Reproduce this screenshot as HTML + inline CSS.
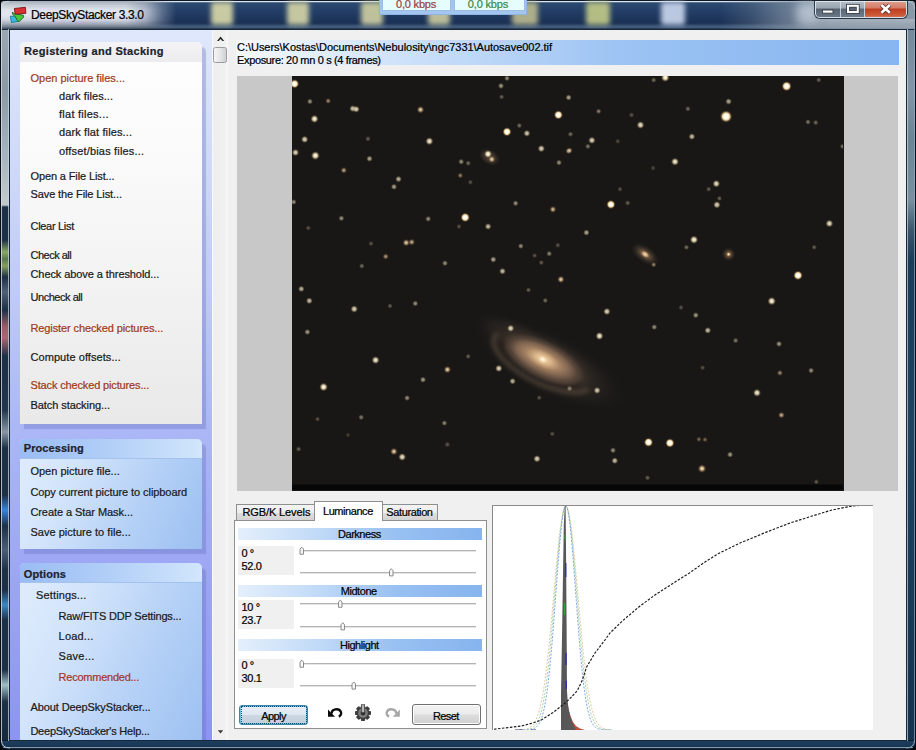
<!DOCTYPE html>
<html><head><meta charset="utf-8"><title>DeepSkyStacker 3.3.0</title>
<style>
*{box-sizing:border-box;margin:0;padding:0}
html,body{width:916px;height:750px;overflow:hidden}
body{position:relative;background:#16324a;font-family:"Liberation Sans",sans-serif;font-size:11px;color:#1a1a1a}
.abs{position:absolute}
.t{position:absolute;white-space:nowrap;line-height:14px;height:14px;-webkit-text-stroke:.22px currentColor}
/* frame */
#titlebar{left:0;top:0;width:916px;height:30px;background:linear-gradient(180deg,#0c1626 0,#0c1626 1px,#dde5ee 1px,#dde5ee 2px,#6f86a2 2px,#2b486e 3.500px,#26426a 8px,#1f3860 16px,#1b3154 23px,#304a6c 25px,#48607f 27px,#3c5270 28px,#16263c 29px,#16263c 30px);overflow:hidden}
#titleglow{left:0;top:1px;width:180px;height:28px;background:linear-gradient(180deg,#a4acb6 0,#c4cad4 4px,#dfe3eb 9px,#e2e5ee 14px,#d0d4e0 19px,#a0a8b6 23px,#6e7a88 26px,#3a4656 28px);-webkit-mask-image:linear-gradient(90deg,#000 0,#000 126px,rgba(0,0,0,.75) 146px,rgba(0,0,0,.3) 162px,transparent 176px);mask-image:linear-gradient(90deg,#000 0,#000 126px,rgba(0,0,0,.75) 146px,rgba(0,0,0,.3) 162px,transparent 176px)}
.blob{position:absolute;top:2px;height:23px;border-radius:3px;filter:blur(2.500px);opacity:.95}
#lframe{left:0;top:30px;width:10px;height:720px;background:linear-gradient(180deg,#9aa8b4 0,#8c9aa6 60px,#a4b2be 120px,#c0c8cc 170px,#c0c8cc 175px,#1c3048 177px,#1c3048 210px,#8aa860 222px,#5a7a50 229px,#86a05c 236px,#1c3048 247px,#506078 262px,#1c3048 280px,#9c5a68 296px,#b06474 308px,#1c3048 326px,#20364e 380px,#8896a6 402px,#1c3048 418px,#1c3048 465px,#3484e0 480px,#1c3048 496px,#4a5e78 520px,#1c3048 540px,#1c3048 560px,#3a88c4 575px,#1c3048 590px,#1c3048 640px,#a0c0c4 655px,#1c3048 672px,#14283c 720px)}
#rframe{left:906px;top:30px;width:10px;height:720px;background:linear-gradient(180deg,#74899a 0,#8296a6 60px,#6c8494 110px,#7a90a0 170px,#3c566c 200px,#1c3c58 230px,#1e4260 400px,#1a3a56 560px,#16324c 720px)}
#bframe{left:0;top:740px;width:916px;height:10px;background:linear-gradient(180deg,#0c1826 0,#0c1826 1px,#1d3d5d 1px,#1b3a59 4px,#18344f 7px,#7f97af 7px,#7f97af 8px,#1a2c40 8px,#0a121c 10px)}
/* content */
#content{left:10px;top:30px;width:896px;height:710px;background:#f0f0f0;overflow:hidden}
#lpanel{left:0;top:0;width:202px;height:710px;background:linear-gradient(180deg,#dfe7fb 0,#d5dffa 80px,#c1ccf7 250px,#aebbf6 370px,#a8b3f5 430px,#99a2f4 580px,#8c94f4 710px)}
#strack{left:202px;top:0;width:17px;height:710px;background:linear-gradient(90deg,#fafafa 0,#fafafa 1px,#eeeeee 1px,#f1f1f1 14px,#fbfbfb 15px,#f2f2f2 16px)}
.sec{position:absolute;border-radius:5px 5px 0 0;box-shadow:4px 5px 1px rgba(100,110,190,.36)}
.hd{position:absolute;left:0;top:0;right:0;height:20px;border-radius:5px 5px 0 0}
.b{font-weight:bold;color:#1e2430}
.r{color:#a03a18}
/* main */
#info{left:226px;top:10px;width:663px;height:25px;background:linear-gradient(90deg,#f5f9fe 0,#e3eefc 12%,#c6ddf9 30%,#9cc3f3 58%,#86b5f0 100%)}
#imgbg{left:227px;top:46px;width:661px;height:415px;background:#c8c8c8}
#sky{left:282px;top:46px;width:552px;height:415px;background:#181716;overflow:hidden}
.tab{position:absolute;border:1px solid #8e8f8f;border-bottom:none;background:linear-gradient(180deg,#f4f4f4 0,#ececec 50%,#dddddd 51%,#d2d2d2 100%)}
#tabpage{left:224px;top:490px;width:253px;height:209px;background:#fff;border:1px solid #8e8f8f}
.bar{position:absolute;left:228px;width:244px;height:12px;background:linear-gradient(90deg,#e4effc 0,#c4dcf8 30%,#98c0f2 65%,#86b4ee 100%)}
.lbl{position:absolute;left:228px;width:56px;height:29px;background:#f0f0f0}
.trk{position:absolute;left:290px;width:176px;height:2px;border-top:1px solid #b4b4b4;background:#e4e4e4}
.thumb{position:absolute;width:5px;height:9px}
.btn{position:absolute;height:20px;border:1px solid #707070;border-radius:3px;background:linear-gradient(180deg,#f2f2f2 0,#ebebeb 48%,#dddddd 52%,#cfcfcf 100%);box-shadow:inset 0 0 0 1px #fcfcfc}
#hist{left:482px;top:475px;width:381px;height:225px;overflow:hidden;background:#fff;border-left:1px solid #8a8a8a;border-top:1px solid #8a8a8a}
</style></head><body>

<!-- window frame -->
<div id="titlebar" class="abs">
  <div id="titleglow" class="abs"></div>
  <div class="blob" style="left:211px;width:22px;background:#d2d3a6"></div>
  <div class="blob" style="left:287px;width:22px;background:#cecfa4"></div>
  <div class="blob" style="left:361px;width:22px;background:#c8c9a0"></div>
  <div class="blob" style="left:428px;width:22px;background:#c4c59e"></div>
  <div class="blob" style="left:512px;width:26px;background:#b4b48c"></div>
  <div class="blob" style="left:586px;width:24px;background:#bcc486"></div>
  <div class="blob" style="left:661px;width:24px;background:#c4d0e8"></div>
  <div class="abs" style="left:720px;top:1px;width:196px;height:28px;background:linear-gradient(90deg,rgba(130,146,162,0) 0,rgba(130,146,162,.25) 30px,rgba(134,150,166,.6) 60px,rgba(140,154,168,.85) 90px,rgba(150,162,176,.9) 196px)"></div>
  <div class="abs" style="left:796px;top:2px;width:24px;height:22px;border-radius:8px;background:rgba(220,230,240,.55);filter:blur(4px)"></div>
  <div class="abs" style="left:790px;top:19px;width:126px;height:9px;background:linear-gradient(180deg,rgba(180,190,200,.7),rgba(150,162,174,.5));-webkit-mask-image:linear-gradient(90deg,transparent 0,#000 40px);mask-image:linear-gradient(90deg,transparent 0,#000 40px)"></div>
</div>
<div id="lframe" class="abs"></div>
<div id="rframe" class="abs"></div>
<div id="bframe" class="abs"></div>
<div class="abs" style="left:0;top:0;width:1px;height:750px;background:#0a0e14"></div>
<div class="abs" style="left:1px;top:8px;width:1px;height:734px;background:rgba(210,222,232,.8)"></div>
<div class="abs" style="left:8px;top:29px;width:1px;height:712px;background:rgba(200,212,222,.75)"></div>
<div class="abs" style="left:9px;top:29px;width:1px;height:712px;background:#18283c"></div>
<div class="abs" style="left:906px;top:29px;width:1px;height:712px;background:#18283c"></div>
<div class="abs" style="left:907px;top:29px;width:1px;height:712px;background:rgba(200,214,226,.7)"></div>
<div class="abs" style="left:915px;top:0;width:1px;height:750px;background:#0a0e14"></div>
<div class="abs" style="left:9px;top:29px;width:898px;height:1px;background:#18283c"></div>
<div class="abs" style="left:9px;top:740px;width:898px;height:1px;background:#18283c"></div>

<div class="abs" style="left:914px;top:8px;width:1px;height:734px;background:rgba(150,178,204,.65)"></div>
<svg class="abs" style="left:0;top:0" width="916" height="750" viewBox="0 0 916 750">
  <!-- rounded outer corners -->
  <path d="M916 740 V750 H904 Q916 750 916 740 Z M0 740 V750 H12 Q0 750 0 740 Z" fill="#05080c"/>
  <path d="M914.500 740 Q914.500 748 906 748" fill="none" stroke="#86a0ba" stroke-width="1"/>
  <path d="M1.500 740 Q1.500 748 10 748" fill="none" stroke="#b4c4d2" stroke-width="1"/>
  <rect x="906" y="747" width="10" height="3" fill="#05080c" opacity="0"/>
  <path d="M0 0 H7 Q0 0 0 7 Z M916 0 H909 Q916 0 916 7 Z" fill="#05080c"/>
  <path d="M1.500 9 Q1.500 1.500 9 1.500" fill="none" stroke="#d4dce6" stroke-width="1"/>
  <path d="M914.500 9 Q914.500 1.500 907 1.500" fill="none" stroke="#b4c4d2" stroke-width="1"/>
</svg>
<!-- app icon -->
<svg class="abs" style="left:0;top:0" width="34" height="30" viewBox="0 0 34 30">
  <path d="M10.300 16.200 L15.600 16.400 L18 21.300 L11.500 22.600 Z" fill="#3db6e6" stroke="#167f8e" stroke-width=".9" stroke-linejoin="round"/>
  <path d="M12.200 12.400 L14.600 13.600 L23.300 15.200 L23.700 17 L19.500 21.400 L17.700 21.300 L15.300 16.500 L12.900 14.700 Z" fill="#46c63e" stroke="#1d6a26" stroke-width=".9" stroke-linejoin="round"/>
  <path d="M14.300 8.500 L25.400 7.300 L25.900 13.300 L15.200 14.200 Z" fill="#d93030" stroke="#7e1616" stroke-width=".9" stroke-linejoin="round"/>
</svg>
<!--TITLETEXT-->

<!-- kbps widget -->
<div class="abs" style="left:379px;top:-2px;width:148px;height:17px;background:#a3c6f0;border:1px solid #8fb4e2"></div>
<div class="abs" style="left:382px;top:-2px;width:69px;height:13px;background:#e5fdfd;border:1px solid #9cbce0"></div>
<div class="abs" style="left:454px;top:-2px;width:71px;height:13px;background:#e5fdfd;border:1px solid #9cbce0"></div>

<!-- caption buttons -->
<div class="abs" style="left:815px;top:-1px;width:92px;height:19px;border:1px solid rgba(225,235,245,.85);border-radius:0 0 5px 5px;overflow:hidden;box-shadow:0 0 0 1px rgba(20,30,45,.8)">
  <div class="abs" style="left:0;top:0;width:25px;height:18px;background:linear-gradient(180deg,#b4bec8 0,#98a4b0 45%,#56626f 50%,#6c7a8a 100%);border-right:1px solid rgba(220,230,240,.8)"></div>
  <div class="abs" style="left:25px;top:0;width:24px;height:18px;background:linear-gradient(180deg,#b8c2cc 0,#9ca8b4 45%,#5a6673 50%,#70808f 100%);border-right:1px solid rgba(220,230,240,.8)"></div>
  <div class="abs" style="left:49px;top:0;width:42px;height:18px;background:linear-gradient(180deg,#e0a496 0,#d27c68 45%,#c03c20 50%,#cc5a3a 85%,#d88468 100%)"></div>
</div>
<div class="abs" style="left:812px;top:0;width:98px;height:1px;background:#1a2430"></div>
<div class="abs" style="left:816px;top:1px;width:90px;height:1px;background:rgba(240,244,248,.75)"></div>
<svg class="abs" style="left:815px;top:0" width="92" height="19" viewBox="0 0 92 19">
  <rect x="7.500" y="10" width="10.500" height="3.200" fill="#fff" stroke="#3c444e" stroke-width="1"/>
  <rect x="33" y="5.800" width="9.800" height="6.200" fill="#5a6674" stroke="#3c444e" stroke-width="3.800"/>
  <rect x="33" y="5.800" width="9.800" height="6.200" fill="none" stroke="#fff" stroke-width="2"/>
  <path d="M66.400 5 L74.800 12.800 M74.800 5 L66.400 12.800" stroke="#5c2a22" stroke-width="4.400" fill="none"/>
  <path d="M66.400 5 L74.800 12.800 M74.800 5 L66.400 12.800" stroke="#fff" stroke-width="2.700" fill="none"/>
</svg>

<!-- client area -->
<div id="content" class="abs">
  <div id="lpanel" class="abs"></div>
  <div id="strack" class="abs"></div>

  <!-- section 1 -->
  <div class="sec" style="left:10px;top:12px;width:182px;height:381.600px;background:linear-gradient(180deg,#fdfdfd 0,#fbfbfb 100px,#f2f2f2 250px,#e9e9e9 381px)">
    <div class="hd" style="background:linear-gradient(180deg,#f4f4f6 0,#ececee 100%)"></div>
  </div>
  <!-- section 2 -->
  <div class="sec" style="left:10px;top:408.500px;width:182px;height:110.500px;background:linear-gradient(115deg,#e0ecfc 0,#d2e4fb 30%,#b4d0f6 65%,#9cc0f1 100%)">
    <div class="hd" style="background:linear-gradient(90deg,#9abcf4 0,#b2cff7 50%,#d2e6fc 100%);border-bottom:1px solid #a4c2ee"></div>
  </div>
  <!-- section 3 -->
  <div class="sec" style="left:10px;top:532.800px;width:182px;height:190px;background:linear-gradient(115deg,#e0ecfc 0,#d2e4fb 30%,#b4d0f6 65%,#9cc0f1 100%)">
    <div class="hd" style="background:linear-gradient(90deg,#9abcf4 0,#b2cff7 50%,#d2e6fc 100%);border-bottom:1px solid #a4c2ee"></div>
  </div>

  <!-- scrollbar bits -->
  <svg class="abs" style="left:202px;top:0" width="17" height="710" viewBox="0 0 17 710">
    <path d="M5 10.900 L8.600 6.600 L12.200 10.900 L10.300 10.900 L8.600 8.900 L6.900 10.900 Z" fill="#262626"/>
    <path d="M5.800 700.200 L8.500 703.600 L11.200 700.200 Z" fill="#3a3a3a"/>
    <defs><linearGradient id="thg" x1="0" x2="1" y1="0" y2="0"><stop offset="0" stop-color="#f6f6f6"/><stop offset=".5" stop-color="#e6e6e8"/><stop offset="1" stop-color="#cfcfd3"/></linearGradient></defs>
    <rect x="1.500" y="17.500" width="13" height="15" rx="2" fill="url(#thg)" stroke="#9c9c9e"/>
  </svg>

  <!-- info bar -->
  <div id="info" class="abs"></div>
  <div id="imgbg" class="abs"></div>
  <div id="sky" class="abs">
    <svg width="551" height="414" viewBox="0 0 551 414" style="position:absolute;left:0;top:0">
      <defs>
        <radialGradient id="sw"><stop offset="0" stop-color="#fffdf0"/><stop offset=".36" stop-color="#f6ecc8" stop-opacity=".96"/><stop offset=".64" stop-color="#c8b48a" stop-opacity=".58"/><stop offset="1" stop-color="#504030" stop-opacity="0"/></radialGradient>
        <radialGradient id="sb"><stop offset="0" stop-color="#ffffff"/><stop offset=".36" stop-color="#fffbea"/><stop offset=".58" stop-color="#f2d8a4" stop-opacity=".92"/><stop offset=".8" stop-color="#8a6840" stop-opacity=".45"/><stop offset="1" stop-color="#403020" stop-opacity="0"/></radialGradient>
        <radialGradient id="so"><stop offset="0" stop-color="#fff0d4"/><stop offset=".3" stop-color="#f0d0a0" stop-opacity=".95"/><stop offset=".6" stop-color="#b8946a" stop-opacity=".55"/><stop offset="1" stop-color="#503820" stop-opacity="0"/></radialGradient>
        <radialGradient id="gal1"><stop offset="0" stop-color="#d0a880"/><stop offset=".45" stop-color="#b48e6a" stop-opacity=".9"/><stop offset=".75" stop-color="#94745a" stop-opacity=".6"/><stop offset="1" stop-color="#705844" stop-opacity="0"/></radialGradient>
        <radialGradient id="gal2"><stop offset="0" stop-color="#6a5646" stop-opacity=".8"/><stop offset=".6" stop-color="#4c3e34" stop-opacity=".55"/><stop offset="1" stop-color="#2a2420" stop-opacity="0"/></radialGradient>
        <radialGradient id="gal4"><stop offset="0" stop-color="#8a6e58" stop-opacity=".95"/><stop offset=".65" stop-color="#725a4a" stop-opacity=".8"/><stop offset=".85" stop-color="#5a483c" stop-opacity=".45"/><stop offset="1" stop-color="#403228" stop-opacity="0"/></radialGradient>
        <filter id="bl3" x="-20%" y="-80%" width="140%" height="260%"><feGaussianBlur stdDeviation="1.400"/></filter>
        <filter id="bl2" x="-20%" y="-50%" width="140%" height="200%"><feGaussianBlur stdDeviation="2.200"/></filter>
        <radialGradient id="gal6"><stop offset="0" stop-color="#f6dcb4"/><stop offset=".5" stop-color="#e0bc90" stop-opacity=".75"/><stop offset="1" stop-color="#c09c74" stop-opacity="0"/></radialGradient>
        <radialGradient id="gal5"><stop offset="0" stop-color="#fffaf0"/><stop offset=".4" stop-color="#ffe8c0" stop-opacity=".8"/><stop offset="1" stop-color="#e0b888" stop-opacity="0"/></radialGradient>
        <radialGradient id="gal3"><stop offset="0" stop-color="#e0b880" stop-opacity=".9"/><stop offset=".4" stop-color="#9a7450" stop-opacity=".5"/><stop offset="1" stop-color="#403020" stop-opacity="0"/></radialGradient>
      </defs>
      <!-- main galaxy NGC 7331 -->
      <g transform="translate(250.800 283.500) rotate(26.500)">
        <ellipse cx="10" cy="1" rx="84" ry="31" fill="url(#gal2)" opacity=".5"/>
        <ellipse cx="-34" cy="-8" rx="46" ry="17" fill="url(#gal2)" opacity=".35"/>
        <ellipse cx="3" cy="1" rx="60" ry="26" fill="url(#gal2)"/>
        <ellipse cx="1" cy="0" rx="47" ry="20" fill="url(#gal4)"/>
        <path d="M-52 -3 A52 21 0 0 0 54 6" fill="none" stroke="#74604e" stroke-width="4.500" opacity=".42" filter="url(#bl2)"/>
        <path d="M-43 1 A43 16.500 0 0 0 44 5" fill="none" stroke="#141312" stroke-width="2.600" opacity=".4" filter="url(#bl3)"/>
        <ellipse cx="0" cy="-.5" rx="37" ry="14.500" fill="url(#gal1)"/>
        <ellipse cx="0" cy="-.5" rx="18" ry="8.500" fill="url(#gal6)"/>
        <ellipse cx="0" cy="0" rx="6" ry="4.500" fill="url(#gal5)"/>
      </g>
      <!-- small galaxies -->
      <g transform="translate(353.100 178.300) rotate(35)"><ellipse rx="17" ry="9" fill="url(#gal2)" opacity=".8"/><ellipse rx="12" ry="6" fill="url(#gal3)"/><ellipse rx="4.500" ry="3" fill="url(#gal6)"/></g>
      <g transform="translate(197.500 81) rotate(30)"><ellipse rx="12" ry="8" fill="url(#gal2)"/></g>
      <circle cx="196" cy="78" r="4.200" fill="url(#sw)"/>
      <circle cx="199.800" cy="83.300" r="3.800" fill="url(#so)" opacity=".85"/>
      <circle cx="436.600" cy="178.300" r="7" fill="url(#gal3)"/><circle cx="436.600" cy="178.300" r="2.500" fill="url(#so)"/>
<circle cx="2.6" cy="7.8" r="4.8" fill="url(#sb)" opacity="1.00"/>
<circle cx="17.9" cy="25.5" r="3.2" fill="url(#sw)" opacity="0.50"/>
<circle cx="36.2" cy="24.9" r="3.2" fill="url(#so)" opacity="0.55"/>
<circle cx="60.8" cy="32.6" r="3.7" fill="url(#sw)" opacity="0.75"/>
<circle cx="64.2" cy="33.2" r="3.7" fill="url(#sw)" opacity="0.80"/>
<circle cx="22.5" cy="42.9" r="4.3" fill="url(#sw)" opacity="0.95"/>
<circle cx="128.5" cy="33.7" r="4.0" fill="url(#so)" opacity="0.85"/>
<circle cx="12.7" cy="63.4" r="3.9" fill="url(#sw)" opacity="0.80"/>
<circle cx="3.5" cy="76.5" r="3.9" fill="url(#sw)" opacity="0.80"/>
<circle cx="23.4" cy="79.6" r="4.6" fill="url(#sw)" opacity="1.00"/>
<circle cx="76.0" cy="62.8" r="3.0" fill="url(#sw)" opacity="0.30"/>
<circle cx="77.5" cy="82.7" r="3.4" fill="url(#sw)" opacity="0.60"/>
<circle cx="137.4" cy="65.2" r="4.2" fill="url(#sw)" opacity="0.90"/>
<circle cx="51.8" cy="94.3" r="3.5" fill="url(#so)" opacity="0.65"/>
<circle cx="106.5" cy="103.1" r="3.5" fill="url(#sw)" opacity="0.65"/>
<circle cx="102.0" cy="110.8" r="3.3" fill="url(#sw)" opacity="0.60"/>
<circle cx="209.0" cy="9.9" r="3.3" fill="url(#sw)" opacity="0.55"/>
<circle cx="215.0" cy="2.3" r="3.1" fill="url(#sw)" opacity="0.50"/>
<circle cx="209.6" cy="20.9" r="2.9" fill="url(#sw)" opacity="0.30"/>
<circle cx="215.0" cy="55.8" r="4.8" fill="url(#sb)" opacity="1.00"/>
<circle cx="227.3" cy="49.6" r="3.0" fill="url(#sw)" opacity="0.35"/>
<circle cx="234.9" cy="57.3" r="3.7" fill="url(#sw)" opacity="0.75"/>
<circle cx="266.4" cy="38.9" r="4.8" fill="url(#sb)" opacity="1.00"/>
<circle cx="276.6" cy="21.5" r="3.3" fill="url(#sw)" opacity="0.60"/>
<circle cx="249.3" cy="72.6" r="3.9" fill="url(#sw)" opacity="0.80"/>
<circle cx="276.6" cy="75.0" r="3.3" fill="url(#sw)" opacity="0.60"/>
<circle cx="267.0" cy="86.6" r="3.2" fill="url(#sw)" opacity="0.50"/>
<circle cx="169.2" cy="85.7" r="3.2" fill="url(#sw)" opacity="0.50"/>
<circle cx="176.2" cy="87.2" r="3.0" fill="url(#sw)" opacity="0.35"/>
<circle cx="168.3" cy="99.5" r="3.2" fill="url(#so)" opacity="0.50"/>
<circle cx="178.4" cy="106.2" r="2.9" fill="url(#sw)" opacity="0.25"/>
<circle cx="223.6" cy="127.3" r="3.2" fill="url(#sw)" opacity="0.50"/>
<circle cx="260.9" cy="133.4" r="3.7" fill="url(#so)" opacity="0.75"/>
<circle cx="173.2" cy="141.4" r="5.0" fill="url(#sb)" opacity="1.00"/>
<circle cx="136.2" cy="142.9" r="3.2" fill="url(#sw)" opacity="0.50"/>
<circle cx="196.1" cy="150.5" r="3.6" fill="url(#sw)" opacity="0.70"/>
<circle cx="167.0" cy="150.5" r="3.0" fill="url(#so)" opacity="0.30"/>
<circle cx="49.4" cy="142.3" r="3.2" fill="url(#sw)" opacity="0.50"/>
<circle cx="16.3" cy="152.0" r="3.0" fill="url(#so)" opacity="0.30"/>
<circle cx="1.7" cy="126.0" r="3.1" fill="url(#sw)" opacity="0.50"/>
<circle cx="114.2" cy="166.7" r="3.9" fill="url(#so)" opacity="0.85"/>
<circle cx="119.7" cy="166.1" r="3.6" fill="url(#so)" opacity="0.70"/>
<circle cx="79.0" cy="167.6" r="2.9" fill="url(#sw)" opacity="0.25"/>
<circle cx="93.7" cy="180.5" r="3.4" fill="url(#so)" opacity="0.60"/>
<circle cx="69.8" cy="190.0" r="3.0" fill="url(#sw)" opacity="0.35"/>
<circle cx="153.0" cy="187.2" r="3.2" fill="url(#sw)" opacity="0.50"/>
<circle cx="201.3" cy="183.5" r="3.4" fill="url(#sw)" opacity="0.60"/>
<circle cx="210.5" cy="195.2" r="3.6" fill="url(#sw)" opacity="0.70"/>
<circle cx="228.8" cy="170.1" r="3.1" fill="url(#sw)" opacity="0.50"/>
<circle cx="242.6" cy="179.6" r="3.0" fill="url(#so)" opacity="0.30"/>
<circle cx="249.3" cy="186.6" r="3.0" fill="url(#so)" opacity="0.35"/>
<circle cx="257.2" cy="177.7" r="3.1" fill="url(#sw)" opacity="0.45"/>
<circle cx="265.8" cy="169.2" r="3.0" fill="url(#sw)" opacity="0.25"/>
<circle cx="268.9" cy="203.4" r="3.9" fill="url(#so)" opacity="0.85"/>
<circle cx="9.3" cy="212.9" r="3.5" fill="url(#sw)" opacity="0.65"/>
<circle cx="339.5" cy="39.0" r="3.0" fill="url(#sw)" opacity="0.25"/>
<circle cx="325.7" cy="65.3" r="3.0" fill="url(#so)" opacity="0.25"/>
<circle cx="361.0" cy="92.0" r="3.0" fill="url(#sw)" opacity="0.20"/>
<circle cx="373.3" cy="1.6" r="4.5" fill="url(#sw)" opacity="1.00"/>
<circle cx="361.7" cy="4.0" r="3.0" fill="url(#sw)" opacity="0.35"/>
<circle cx="494.6" cy="10.2" r="5.3" fill="url(#sb)" opacity="1.00"/>
<circle cx="526.7" cy="4.0" r="3.0" fill="url(#sw)" opacity="0.30"/>
<circle cx="306.6" cy="35.3" r="3.2" fill="url(#so)" opacity="0.50"/>
<circle cx="436.6" cy="25.5" r="3.5" fill="url(#sw)" opacity="0.60"/>
<circle cx="395.9" cy="32.8" r="3.0" fill="url(#sw)" opacity="0.35"/>
<circle cx="434.1" cy="40.5" r="6.5" fill="url(#sb)" opacity="1.00"/>
<circle cx="348.5" cy="49.0" r="4.1" fill="url(#sw)" opacity="0.85"/>
<circle cx="516.0" cy="46.0" r="3.0" fill="url(#sw)" opacity="0.40"/>
<circle cx="523.7" cy="46.6" r="3.0" fill="url(#sw)" opacity="0.35"/>
<circle cx="278.5" cy="58.2" r="3.0" fill="url(#sw)" opacity="0.35"/>
<circle cx="299.9" cy="64.3" r="3.9" fill="url(#sw)" opacity="0.80"/>
<circle cx="295.9" cy="70.4" r="3.0" fill="url(#sw)" opacity="0.40"/>
<circle cx="277.6" cy="74.4" r="3.3" fill="url(#so)" opacity="0.60"/>
<circle cx="399.9" cy="60.6" r="3.6" fill="url(#sw)" opacity="0.70"/>
<circle cx="383.0" cy="85.7" r="4.2" fill="url(#sw)" opacity="0.90"/>
<circle cx="424.3" cy="107.7" r="4.0" fill="url(#sw)" opacity="0.85"/>
<circle cx="416.7" cy="113.2" r="2.9" fill="url(#sw)" opacity="0.30"/>
<circle cx="424.9" cy="128.8" r="3.9" fill="url(#sw)" opacity="0.80"/>
<circle cx="427.4" cy="122.4" r="2.9" fill="url(#sw)" opacity="0.30"/>
<circle cx="318.9" cy="128.5" r="4.8" fill="url(#sb)" opacity="1.00"/>
<circle cx="335.7" cy="127.0" r="3.0" fill="url(#sw)" opacity="0.30"/>
<circle cx="328.0" cy="113.2" r="2.9" fill="url(#sw)" opacity="0.25"/>
<circle cx="294.4" cy="156.6" r="3.4" fill="url(#sw)" opacity="0.60"/>
<circle cx="402.0" cy="163.7" r="4.4" fill="url(#sw)" opacity="0.95"/>
<circle cx="394.4" cy="171.3" r="3.0" fill="url(#sw)" opacity="0.35"/>
<circle cx="361.7" cy="188.7" r="3.1" fill="url(#so)" opacity="0.50"/>
<circle cx="537.4" cy="147.5" r="4.1" fill="url(#sw)" opacity="0.85"/>
<circle cx="522.2" cy="171.3" r="2.9" fill="url(#sw)" opacity="0.30"/>
<circle cx="506.0" cy="199.4" r="5.0" fill="url(#sb)" opacity="1.00"/>
<circle cx="550.6" cy="70.4" r="3.0" fill="url(#sw)" opacity="0.40"/>
<circle cx="17.3" cy="224.8" r="3.6" fill="url(#sw)" opacity="0.70"/>
<circle cx="62.2" cy="233.0" r="3.9" fill="url(#sw)" opacity="0.80"/>
<circle cx="15.4" cy="256.0" r="3.3" fill="url(#sw)" opacity="0.55"/>
<circle cx="123.3" cy="227.5" r="3.2" fill="url(#sw)" opacity="0.50"/>
<circle cx="98.0" cy="230.0" r="2.9" fill="url(#sw)" opacity="0.30"/>
<circle cx="83.6" cy="284.1" r="4.2" fill="url(#sw)" opacity="0.90"/>
<circle cx="31.6" cy="311.0" r="4.5" fill="url(#sw)" opacity="1.00"/>
<circle cx="155.4" cy="293.6" r="4.0" fill="url(#so)" opacity="0.85"/>
<circle cx="131.0" cy="303.7" r="3.3" fill="url(#sw)" opacity="0.55"/>
<circle cx="115.1" cy="322.0" r="3.2" fill="url(#sw)" opacity="0.50"/>
<circle cx="69.2" cy="341.3" r="3.1" fill="url(#sw)" opacity="0.40"/>
<circle cx="25.5" cy="343.1" r="3.0" fill="url(#so)" opacity="0.30"/>
<circle cx="6.6" cy="373.1" r="3.0" fill="url(#sw)" opacity="0.30"/>
<circle cx="101.9" cy="375.5" r="4.0" fill="url(#so)" opacity="0.85"/>
<circle cx="110.2" cy="381.0" r="4.1" fill="url(#sw)" opacity="0.85"/>
<circle cx="152.4" cy="347.1" r="3.1" fill="url(#sw)" opacity="0.45"/>
<circle cx="155.4" cy="368.5" r="3.2" fill="url(#sw)" opacity="0.25"/>
<circle cx="206.8" cy="292.4" r="3.9" fill="url(#sw)" opacity="0.80"/>
<circle cx="220.6" cy="305.2" r="3.5" fill="url(#sw)" opacity="0.65"/>
<circle cx="218.7" cy="252.3" r="3.9" fill="url(#sw)" opacity="0.80"/>
<circle cx="176.2" cy="280.4" r="2.9" fill="url(#sw)" opacity="0.30"/>
<circle cx="245.0" cy="382.8" r="3.9" fill="url(#sw)" opacity="0.80"/>
<circle cx="236.5" cy="214.0" r="2.9" fill="url(#sw)" opacity="0.30"/>
<circle cx="253.3" cy="224.5" r="3.0" fill="url(#sw)" opacity="0.35"/>
<circle cx="56.0" cy="359.0" r="3.0" fill="url(#so)" opacity="0.20"/>
<circle cx="247.2" cy="321.7" r="2.9" fill="url(#sw)" opacity="0.25"/>
<circle cx="260.3" cy="357.8" r="2.9" fill="url(#sw)" opacity="0.25"/>
<circle cx="314.9" cy="235.5" r="3.9" fill="url(#sw)" opacity="0.80"/>
<circle cx="307.5" cy="260.0" r="4.2" fill="url(#sw)" opacity="0.90"/>
<circle cx="305.1" cy="314.4" r="3.8" fill="url(#sw)" opacity="0.75"/>
<circle cx="277.6" cy="312.5" r="3.2" fill="url(#sw)" opacity="0.40"/>
<circle cx="362.3" cy="251.1" r="3.2" fill="url(#sw)" opacity="0.50"/>
<circle cx="403.8" cy="239.2" r="3.3" fill="url(#sw)" opacity="0.55"/>
<circle cx="415.8" cy="254.4" r="3.6" fill="url(#sw)" opacity="0.70"/>
<circle cx="443.6" cy="264.5" r="3.1" fill="url(#sw)" opacity="0.40"/>
<circle cx="479.7" cy="225.1" r="4.4" fill="url(#sw)" opacity="0.95"/>
<circle cx="487.0" cy="267.9" r="3.3" fill="url(#sw)" opacity="0.55"/>
<circle cx="487.9" cy="296.9" r="3.3" fill="url(#so)" opacity="0.55"/>
<circle cx="519.1" cy="294.5" r="3.2" fill="url(#sw)" opacity="0.50"/>
<circle cx="465.0" cy="316.8" r="4.2" fill="url(#sw)" opacity="0.90"/>
<circle cx="489.4" cy="339.1" r="3.6" fill="url(#so)" opacity="0.70"/>
<circle cx="356.5" cy="366.3" r="4.9" fill="url(#sb)" opacity="1.00"/>
<circle cx="377.9" cy="367.0" r="4.9" fill="url(#sb)" opacity="1.00"/>
<circle cx="406.9" cy="363.3" r="3.0" fill="url(#so)" opacity="0.40"/>
<circle cx="413.0" cy="363.6" r="3.0" fill="url(#so)" opacity="0.40"/>
<circle cx="438.1" cy="378.6" r="3.3" fill="url(#sw)" opacity="0.55"/>
<circle cx="410.0" cy="392.6" r="4.5" fill="url(#so)" opacity="0.95"/>
<circle cx="321.0" cy="374.3" r="3.2" fill="url(#sw)" opacity="0.50"/>
<circle cx="322.8" cy="384.7" r="3.6" fill="url(#sw)" opacity="0.70"/>
<circle cx="355.5" cy="401.8" r="3.0" fill="url(#sw)" opacity="0.30"/>
<circle cx="524.3" cy="405.8" r="3.0" fill="url(#so)" opacity="0.35"/>
<circle cx="410.6" cy="291.7" r="2.9" fill="url(#sw)" opacity="0.25"/>
<circle cx="389.0" cy="231.5" r="2.9" fill="url(#sw)" opacity="0.25"/>
      <rect x="0" y="408.500" width="552" height="7" fill="#070707"/>
    </svg>
  </div>

  <!-- tabs -->
  <div class="tab" style="left:226px;top:474px;width:79px;height:17px"></div>
  <div class="tab" style="left:372px;top:474px;width:56px;height:17px"></div>
  <div id="tabpage" class="abs"></div>
  <div class="tab" style="left:304px;top:471px;width:69px;height:20px;background:#fff"></div>

  <div class="bar" style="top:498px"></div>
  <div class="bar" style="top:554.600px"></div>
  <div class="bar" style="top:609px"></div>
  <div class="lbl" style="top:516px"></div>
  <div class="lbl" style="top:570px"></div>
  <div class="lbl" style="top:629px"></div>

  <div class="trk" style="top:520px"></div>
  <div class="trk" style="top:541.600px"></div>
  <div class="trk" style="top:573px"></div>
  <div class="trk" style="top:595.600px"></div>
  <div class="trk" style="top:633px"></div>
  <div class="trk" style="top:654.800px"></div>
  <svg class="abs" style="left:225px;top:490px" width="252" height="208" viewBox="235 520 252 208">
    <defs><g id="th"><path d="M.5 2.600 L2.250 .6 L4 2.600 V7.800 H.5 Z" fill="#f6f6f6" stroke="#808080" stroke-width=".9"/></g></defs>
    <use href="#th" x="299.500" y="546.500"/>
    <use href="#th" x="389" y="568.100"/>
    <use href="#th" x="338" y="599.500"/>
    <use href="#th" x="340.500" y="622.100"/>
    <use href="#th" x="299.500" y="659.500"/>
    <use href="#th" x="351.500" y="681.300"/>
    <!-- undo -->
    <g>
      <path d="M328 709.600 V716.800 H335 Z" fill="#0c0c0c"/>
      <path d="M331.800 713.600 A4.700 3.900 0 1 1 338.800 716.600" fill="none" stroke="#0c0c0c" stroke-width="2.300"/>
    </g>
    <!-- redo (disabled) -->
    <g>
      <path d="M399.800 709.600 V716.800 H392.800 Z" fill="#a6a6a6"/>
      <path d="M396 713.600 A4.700 3.900 0 1 0 389 716.600" fill="none" stroke="#a6a6a6" stroke-width="2.300"/>
    </g>
    <!-- gear -->
    <g transform="translate(363 713)">
      <g fill="#3e3e3e">
        <rect x="-2.100" y="-8" width="4.200" height="16" rx=".8"/>
        <rect x="-2.100" y="-8" width="4.200" height="16" rx=".8" transform="rotate(45)"/>
        <rect x="-2.100" y="-8" width="4.200" height="16" rx=".8" transform="rotate(90)"/>
        <rect x="-2.100" y="-8" width="4.200" height="16" rx=".8" transform="rotate(135)"/>
        <circle r="6.200"/>
      </g>
      <circle r="4.800" fill="#7e7e7e"/>
      <circle r="2.400" fill="#2e2e2e"/>
      <rect x="-1.700" y="-8.300" width="3.400" height="8" fill="#b4b4b4" stroke="#3a3a3a" stroke-width=".7"/>
    </g>
  </svg>

  <div class="btn" style="left:229.400px;top:674.500px;width:68.600px;height:20.500px;border-color:#3a86ac;background:linear-gradient(180deg,#e8eef6 0,#dde6f0 48%,#ccd7e3 52%,#c2cedb 100%);box-shadow:inset 0 0 0 1px #6cc4e4"></div>
  <div class="abs" style="left:231px;top:676px;width:65.500px;height:17.500px;border:1px dotted #164e70"></div>
  <div class="btn" style="left:402px;top:674.300px;width:69px;height:20.700px"></div>

  <!-- histogram -->
  <div id="hist" class="abs">
    <svg width="381" height="226" viewBox="0 0 381 226" style="position:absolute;left:0;top:-1px">
      <g fill="none" stroke-width="1" stroke-dasharray="2 1.500">
        <path d="M26.8,224.9 L27.8,224.8 L28.8,224.7 L29.8,224.6 L30.8,224.5 L31.8,224.3 L32.8,224.1 L33.8,223.9 L34.8,223.5 L35.8,223.1 L36.8,222.5 L37.8,221.8 L38.8,221.0 L39.8,219.9 L40.8,218.6 L41.8,217.0 L42.8,215.2 L43.8,212.9 L44.8,210.3 L45.8,207.2 L46.8,203.6 L47.8,199.4 L48.8,194.7 L49.8,189.3 L50.8,183.3 L51.8,176.6 L52.8,169.1 L53.8,161.0 L54.8,152.3 L55.8,142.9 L56.8,132.9 L57.8,122.4 L58.8,111.6 L59.8,100.4 L60.8,89.1 L61.8,77.8 L62.8,66.7 L63.8,55.9 L64.8,45.6 L65.8,36.0 L66.8,27.3 L67.8,19.6 L68.8,13.1 L69.8,7.9 L70.8,4.1 L71.8,1.8 L72.8,1.0 L73.8,1.8 L74.8,4.1 L75.8,7.9 L76.8,13.1 L77.8,19.6 L78.8,27.3 L79.8,36.0 L80.8,45.6 L81.8,55.9 L82.8,66.7 L83.8,77.8 L84.8,89.1 L85.8,100.4 L86.8,111.6 L87.8,122.4 L88.8,132.9 L89.8,142.9 L90.8,152.3 L91.8,161.0 L92.8,169.1 L93.8,176.6 L94.8,183.3 L95.8,189.3 L96.8,194.7 L97.8,199.4 L98.8,203.6 L99.8,207.2 L100.8,210.3 L101.8,212.9 L102.8,215.2 L103.8,217.0 L104.8,218.6 L105.8,219.9 L106.8,221.0 L107.8,221.8 L108.8,222.5 L109.8,223.1 L110.8,223.5 L111.8,223.9 L112.8,224.1 L113.8,224.3 L114.8,224.5 L115.8,224.6 L116.8,224.7 L117.8,224.8 L118.8,224.9" stroke="#e4c89c"/>
        <path d="M26.8,225.0 L27.8,224.9 L28.8,224.9 L29.8,224.9 L30.8,224.8 L31.8,224.8 L32.8,224.7 L33.8,224.6 L34.8,224.4 L35.8,224.2 L36.8,223.9 L37.8,223.6 L38.8,223.1 L39.8,222.5 L40.8,221.7 L41.8,220.8 L42.8,219.6 L43.8,218.1 L44.8,216.2 L45.8,214.0 L46.8,211.3 L47.8,208.1 L48.8,204.3 L49.8,199.8 L50.8,194.7 L51.8,188.8 L52.8,182.1 L53.8,174.6 L54.8,166.3 L55.8,157.1 L56.8,147.2 L57.8,136.6 L58.8,125.3 L59.8,113.6 L60.8,101.5 L61.8,89.1 L62.8,76.8 L63.8,64.7 L64.8,53.1 L65.8,42.1 L66.8,32.0 L67.8,23.0 L68.8,15.3 L69.8,9.2 L70.8,4.7 L71.8,1.9 L72.8,1.0 L73.8,1.9 L74.8,4.7 L75.8,9.2 L76.8,15.3 L77.8,23.0 L78.8,32.0 L79.8,42.1 L80.8,53.1 L81.8,64.7 L82.8,76.8 L83.8,89.1 L84.8,101.5 L85.8,113.6 L86.8,125.3 L87.8,136.6 L88.8,147.2 L89.8,157.1 L90.8,166.3 L91.8,174.6 L92.8,182.1 L93.8,188.8 L94.8,194.7 L95.8,199.8 L96.8,204.3 L97.8,208.1 L98.8,211.3 L99.8,214.0 L100.8,216.2 L101.8,218.1 L102.8,219.6 L103.8,220.8 L104.8,221.7 L105.8,222.5 L106.8,223.1 L107.8,223.6 L108.8,223.9 L109.8,224.2 L110.8,224.4 L111.8,224.6 L112.8,224.7 L113.8,224.8 L114.8,224.8 L115.8,224.9 L116.8,224.9 L117.8,224.9 L118.8,225.0" stroke="#9cd4a4"/>
        <path d="M26.8,225.0 L27.8,225.0 L28.8,225.0 L29.8,225.0 L30.8,225.0 L31.8,224.9 L32.8,224.9 L33.8,224.9 L34.8,224.8 L35.8,224.8 L36.8,224.7 L37.8,224.5 L38.8,224.3 L39.8,224.0 L40.8,223.7 L41.8,223.2 L42.8,222.5 L43.8,221.7 L44.8,220.6 L45.8,219.1 L46.8,217.4 L47.8,215.2 L48.8,212.4 L49.8,209.1 L50.8,205.1 L51.8,200.3 L52.8,194.7 L53.8,188.2 L54.8,180.7 L55.8,172.2 L56.8,162.7 L57.8,152.3 L58.8,140.9 L59.8,128.8 L60.8,116.0 L61.8,102.7 L62.8,89.1 L63.8,75.6 L64.8,62.3 L65.8,49.7 L66.8,37.9 L67.8,27.3 L68.8,18.2 L69.8,10.9 L70.8,5.4 L71.8,2.1 L72.8,1.0 L73.8,2.1 L74.8,5.4 L75.8,10.9 L76.8,18.2 L77.8,27.3 L78.8,37.9 L79.8,49.7 L80.8,62.3 L81.8,75.6 L82.8,89.1 L83.8,102.7 L84.8,116.0 L85.8,128.8 L86.8,140.9 L87.8,152.3 L88.8,162.7 L89.8,172.2 L90.8,180.7 L91.8,188.2 L92.8,194.7 L93.8,200.3 L94.8,205.1 L95.8,209.1 L96.8,212.4 L97.8,215.2 L98.8,217.4 L99.8,219.1 L100.8,220.6 L101.8,221.7 L102.8,222.5 L103.8,223.2 L104.8,223.7 L105.8,224.0 L106.8,224.3 L107.8,224.5 L108.8,224.7 L109.8,224.8 L110.8,224.8 L111.8,224.9 L112.8,224.9 L113.8,224.9 L114.8,225.0 L115.8,225.0 L116.8,225.0 L117.8,225.0 L118.8,225.0" stroke="#7ca4e0"/>
      </g>
      <path d="M68 225 V196 L74 196 L75.500 204 L77.500 211 L80 217 L83 221 L87 223.500 L92 225 Z" fill="#b8503e"/>
      <path d="M68 225 V190 L69.200 120 L70.800 20 L71.800 1 L72.600 1 L73 40 L73.600 120 L74 186 L74.800 198 L76 206 L78 214 L80.500 220 L83 225 Z" fill="#585858"/>
      <g stroke-width="1.200">
        <path d="M72.800 58v14M73 148v12M73.300 176v8" stroke="#2626b8"/>
        <path d="M71.600 98v12M72 30v5" stroke="#2ca03a"/>
      </g>
      <path d="M22 225h8M38 225h5" stroke="#303078" stroke-width="1"/>
      <path d="M1.0,224.2 L15.0,222.6 L28.3,221.0 L39.0,218.3 L48.3,215.0 L60.0,207.5 L71.0,199.0 L78.0,192.5 L84.3,185.7 L89.4,175.0 L93.7,161.7 L102.0,148.0 L111.0,136.3 L117.0,128.0 L129.9,115.5 L147.0,101.0 L163.0,89.3 L179.0,79.0 L196.5,67.9 L212.0,57.0 L225.0,48.8 L247.0,38.0 L272.7,27.4 L297.0,18.0 L320.3,10.7 L339.0,5.0 L358.4,1.2 L369.0,0.2 L378.4,-0.2" fill="none" stroke="#1a1a1a" stroke-width="1.150" stroke-dasharray="2.500 1.500"/>
    </svg>
  </div>
</div>

<span class="t" style="left:31.0px;top:7.7px;letter-spacing:-0.337px;font-size:12px;color:#000">DeepSkyStacker 3.3.0</span>
<span class="t" style="left:396.0px;top:-3.4px;letter-spacing:-0.185px;color:#9a3c3c">0,0 kbps</span>
<span class="t" style="left:467.8px;top:-3.4px;letter-spacing:-0.156px;color:#3a8a3c">0,0 kbps</span>
<span class="t" style="left:24.0px;top:44.2px;letter-spacing:0.325px;font-weight:bold;color:#1e222c">Registering and Stacking</span>
<span class="t" style="left:30.5px;top:70.7px;letter-spacing:-0.014px;color:#a03a18">Open picture files...</span>
<span class="t" style="left:59.0px;top:88.7px;letter-spacing:0.068px;">dark files...</span>
<span class="t" style="left:59.0px;top:107.2px;letter-spacing:0.253px;">flat files...</span>
<span class="t" style="left:59.0px;top:125.2px;letter-spacing:0.122px;">dark flat files...</span>
<span class="t" style="left:59.0px;top:143.7px;letter-spacing:0.172px;">offset/bias files...</span>
<span class="t" style="left:30.5px;top:169.2px;letter-spacing:-0.123px;">Open a File List...</span>
<span class="t" style="left:30.5px;top:186.7px;letter-spacing:-0.102px;">Save the File List...</span>
<span class="t" style="left:30.5px;top:218.6px;letter-spacing:-0.308px;">Clear List</span>
<span class="t" style="left:30.5px;top:247.5px;letter-spacing:-0.506px;">Check all</span>
<span class="t" style="left:30.5px;top:266.9px;letter-spacing:-0.082px;">Check above a threshold...</span>
<span class="t" style="left:30.5px;top:289.9px;letter-spacing:-0.466px;">Uncheck all</span>
<span class="t" style="left:30.5px;top:321.2px;letter-spacing:-0.109px;color:#a03a18">Register checked pictures...</span>
<span class="t" style="left:30.5px;top:350.2px;letter-spacing:0.066px;">Compute offsets...</span>
<span class="t" style="left:30.5px;top:378.2px;letter-spacing:-0.145px;color:#a03a18">Stack checked pictures...</span>
<span class="t" style="left:30.5px;top:397.5px;letter-spacing:-0.076px;">Batch stacking...</span>
<span class="t" style="left:23.8px;top:440.9px;letter-spacing:0.065px;font-weight:bold;color:#1e222c">Processing</span>
<span class="t" style="left:30.4px;top:463.8px;letter-spacing:0.006px;">Open picture file...</span>
<span class="t" style="left:30.4px;top:484.5px;letter-spacing:-0.068px;">Copy current picture to clipboard</span>
<span class="t" style="left:30.4px;top:504.8px;letter-spacing:-0.067px;">Create a Star Mask...</span>
<span class="t" style="left:30.4px;top:524.6px;letter-spacing:0.033px;">Save picture to file...</span>
<span class="t" style="left:23.8px;top:566.9px;letter-spacing:0.106px;font-weight:bold;color:#1e222c">Options</span>
<span class="t" style="left:36.1px;top:587.6px;letter-spacing:0.128px;">Settings...</span>
<span class="t" style="left:58.6px;top:609.0px;letter-spacing:-0.176px;">Raw/FITS DDP Settings...</span>
<span class="t" style="left:58.6px;top:628.6px;letter-spacing:0.193px;">Load...</span>
<span class="t" style="left:58.6px;top:649.2px;letter-spacing:0.242px;">Save...</span>
<span class="t" style="left:58.6px;top:669.8px;letter-spacing:-0.244px;color:#a8342a">Recommended...</span>
<span class="t" style="left:30.4px;top:699.5px;letter-spacing:-0.091px;">About DeepSkyStacker...</span>
<span class="t" style="left:30.4px;top:724.2px;letter-spacing:-0.216px;">DeepSkyStacker&#x27;s Help...</span>
<span class="t" style="left:237.0px;top:39.8px;letter-spacing:-0.029px;color:#000">C:\Users\Kostas\Documents\Nebulosity\ngc7331\Autosave002.tif</span>
<span class="t" style="left:237.0px;top:53.0px;letter-spacing:-0.347px;color:#000">Exposure: 20 mn 0 s (4 frames)</span>
<span class="t" style="left:242.4px;top:505.4px;letter-spacing:-0.099px;color:#000">RGB/K Levels</span>
<span class="t" style="left:323.0px;top:503.8px;letter-spacing:-0.441px;color:#000">Luminance</span>
<span class="t" style="left:386.3px;top:505.4px;letter-spacing:-0.384px;color:#000">Saturation</span>
<span class="t" style="left:338.0px;top:527.0px;letter-spacing:-0.467px;color:#000">Darkness</span>
<span class="t" style="left:340.7px;top:583.6px;letter-spacing:-0.440px;color:#000">Midtone</span>
<span class="t" style="left:339.9px;top:638.2px;letter-spacing:-0.439px;color:#000">Highlight</span>
<span class="t" style="left:241.6px;top:545.9px;letter-spacing:-0.539px;color:#000">0 °</span>
<span class="t" style="left:241.6px;top:559.2px;letter-spacing:-0.341px;color:#000">52.0</span>
<span class="t" style="left:241.6px;top:599.7px;letter-spacing:-0.401px;color:#000">10 °</span>
<span class="t" style="left:241.6px;top:613.1px;letter-spacing:-0.341px;color:#000">23.7</span>
<span class="t" style="left:241.6px;top:657.9px;letter-spacing:-0.539px;color:#000">0 °</span>
<span class="t" style="left:241.6px;top:671.3px;letter-spacing:-0.341px;color:#000">30.1</span>
<span class="t" style="left:261.3px;top:708.5px;letter-spacing:-0.600px;color:#000">Apply</span>
<span class="t" style="left:433.0px;top:708.5px;letter-spacing:-0.600px;color:#000">Reset</span>
</body></html>
